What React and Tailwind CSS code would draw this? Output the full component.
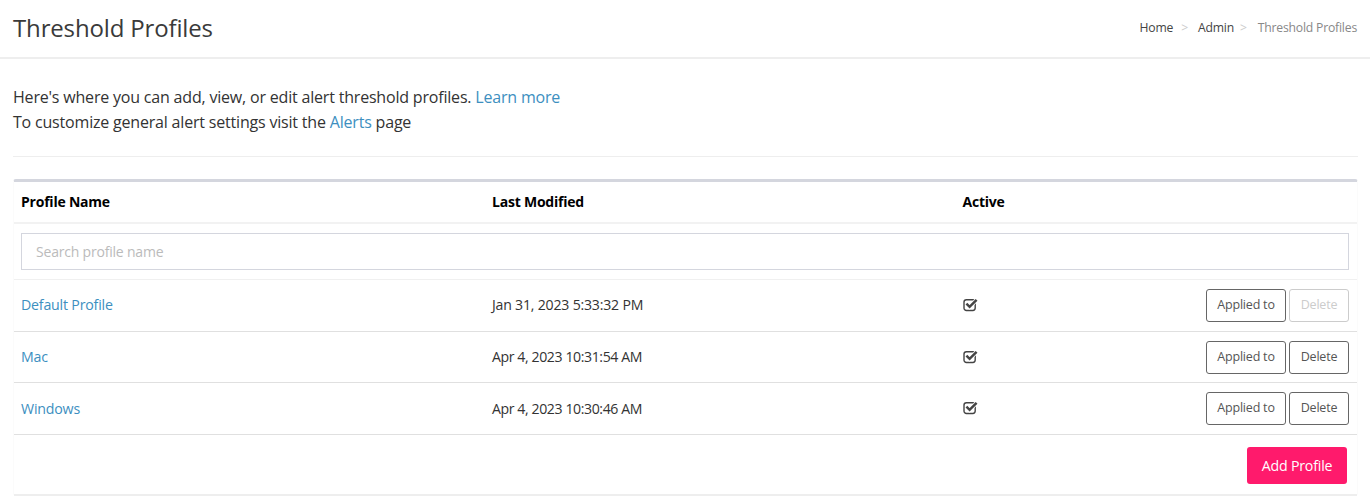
function Check() {
  return (
    <svg width="15" height="15" viewBox="0 0 15 15" className="mb-[2px] block">
      <rect x="1" y="2.7" width="11.2" height="10.8" rx="2.4" fill="none" stroke="#444" strokeWidth="1.4" />
      <path d="M3.4 6.6 L6.6 9.8 L13.6 2.8" fill="none" stroke="#fff" strokeWidth="4" />
      <path d="M3.4 6.6 L6.6 9.8 L13.6 2.8" fill="none" stroke="#444" strokeWidth="2.5" />
    </svg>
  );
}
function Row({ name, date, disabled, h, textClass, dateClass }) {
  return (
    <div className={`grid grid-cols-[471px_470.5px_1fr] items-center border-b border-[#e0e0e0] pl-[7px] pr-[8px] ${h}`}>
      <a className={`text-[14.2px] text-[#3d8fbf] ${textClass}`}>{name}</a>
      <div className={`text-[14.1px] text-[#333] ${textClass} ${dateClass}`}>{date}</div>
      <div className="flex items-center justify-between">
        <Check />
        <div className="flex gap-[3px]">
          <button className="h-[33px] w-[80px] rounded-[3px] border border-[#666] text-[12.5px] text-[#555]">Applied to</button>
          <button className={`h-[33px] w-[60px] rounded-[3px] border text-[12.5px] ${disabled ? "border-[#ccc] text-[#ccc]" : "border-[#666] text-[#555]"}`}>Delete</button>
        </div>
      </div>
    </div>
  );
}
export default function App() {
  return (
    <div className="h-[498px] w-[1370px] overflow-hidden bg-white font-['Open_Sans',sans-serif] tracking-[-0.2px] text-[#333]">
      <header className="flex h-[59px] items-center justify-between border-b-2 border-[#eeeeee] pb-[1px] pl-[13px] pr-[13px]">
        <h1 className="text-[24px] tracking-[-0.15px] text-[#3a3a3a]">Threshold Profiles</h1>
        <nav className="flex items-center text-[12.2px]">
          <span className="text-[#444]">Home</span>
          <span className="ml-2 mr-[10px] text-[#ccc]">&gt;</span>
          <span className="text-[#444]">Admin</span>
          <span className="ml-[6px] mr-[11px] text-[#ccc]">&gt;</span>
          <span className="text-[#888]">Threshold Profiles</span>
        </nav>
      </header>
      <div className="ml-[13px] mr-[12px]">
        <div className="border-b border-[#eeeeee] pb-[21px] pt-[26px] text-[16px] leading-[25px] tracking-[-0.19px] text-[#333]">
          <p>Here's where you can add, view, or edit alert threshold profiles. <a className="text-[#3d8fbf]">Learn more</a></p>
          <p>To customize general alert settings visit the <a className="text-[#3d8fbf]">Alerts</a> page</p>
        </div>
        <div className="mt-[22px] rounded-[3px] border-x border-t-[3px] border-x-[#fbfbfb] border-t-[#d4d6de]">
          <div className="grid h-[42px] grid-cols-[471px_470.5px_1fr] items-center border-b-2 border-[#f2f2f2] pb-[2px] pl-[7px] text-[14px] font-bold tracking-[-0.22px] text-black">
            <div>Profile Name</div>
            <div>Last Modified</div>
            <div>Active</div>
          </div>
          <div className="flex h-[56px] items-center border-b border-[#f0f0f0] pl-[7px] pr-[8px]">
            <input placeholder="Search profile name" className="h-[37px] w-full border border-[#d4d6de] px-[14px] text-[14px] placeholder:text-[#bbb]" />
          </div>
          <Row name="Default Profile" date="Jan 31, 2023 5:33:32 PM" disabled h="h-[52px]" textClass="mb-[1px]" />
          <Row name="Mac" date="Apr 4, 2023 10:31:54 AM" h="h-[51px]" dateClass="tracking-[-0.4px]" />
          <Row name="Windows" date="Apr 4, 2023 10:30:46 AM" h="h-[52px]" dateClass="tracking-[-0.4px]" />
          <div className="flex h-[61px] items-center justify-end border-b-2 border-[#eeeeee] pr-[10px] pt-[2px]">
            <button className="h-[37px] w-[100px] rounded-[3px] bg-[#ff1a6c] text-[14.2px] text-white">Add Profile</button>
          </div>
        </div>
      </div>
    </div>
  );
}
